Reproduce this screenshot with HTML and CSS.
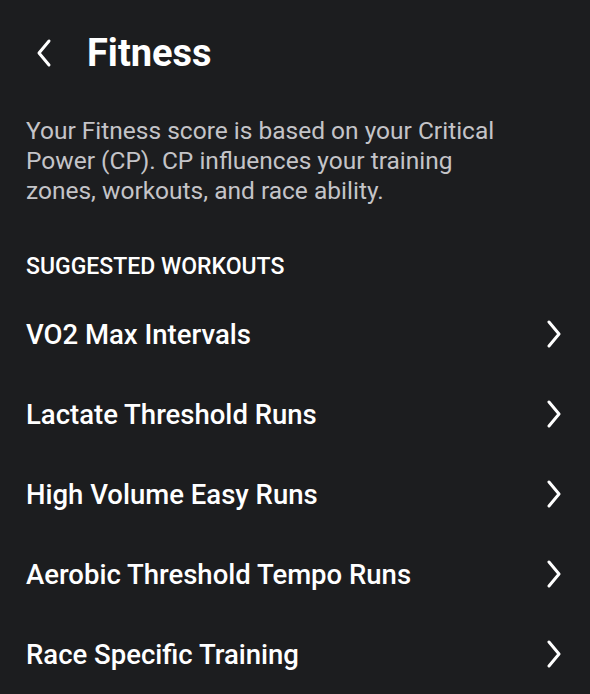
FILE: index.html
```html
<!DOCTYPE html>
<html>
<head>
<meta charset="utf-8">
<link rel="stylesheet" href="styles.css">
</head>
<body>
<div class="screen">
  <header class="header">
    <svg class="back" width="16" height="30" viewBox="0 0 16 30"><path d="M13 3 L3 15 L13 27" fill="none" stroke="#fff" stroke-width="3" stroke-linecap="round" stroke-linejoin="round"/></svg>
    <h1 class="title">Fitness</h1>
  </header>
  <p class="desc">Your Fitness score is based on your Critical Power (CP). CP influences your training zones, workouts, and race ability.</p>
  <h2 class="section">SUGGESTED WORKOUTS</h2>
  <ul class="list">
    <li class="row"><span>VO2 Max Intervals</span><svg class="chev" width="14" height="28" viewBox="0 0 14 28"><path d="M2 2 L12 14 L2 26" fill="none" stroke="#fff" stroke-width="3" stroke-linecap="round" stroke-linejoin="round"/></svg></li>
    <li class="row"><span>Lactate Threshold Runs</span><svg class="chev" width="14" height="28" viewBox="0 0 14 28"><path d="M2 2 L12 14 L2 26" fill="none" stroke="#fff" stroke-width="3" stroke-linecap="round" stroke-linejoin="round"/></svg></li>
    <li class="row"><span>High Volume Easy Runs</span><svg class="chev" width="14" height="28" viewBox="0 0 14 28"><path d="M2 2 L12 14 L2 26" fill="none" stroke="#fff" stroke-width="3" stroke-linecap="round" stroke-linejoin="round"/></svg></li>
    <li class="row"><span>Aerobic Threshold Tempo Runs</span><svg class="chev" width="14" height="28" viewBox="0 0 14 28"><path d="M2 2 L12 14 L2 26" fill="none" stroke="#fff" stroke-width="3" stroke-linecap="round" stroke-linejoin="round"/></svg></li>
    <li class="row"><span>Race Specific Training</span><svg class="chev" width="14" height="28" viewBox="0 0 14 28"><path d="M2 2 L12 14 L2 26" fill="none" stroke="#fff" stroke-width="3" stroke-linecap="round" stroke-linejoin="round"/></svg></li>
  </ul>
</div>
</body>
</html>
```
FILE: styles.css
```css
html, body {
  margin: 0;
  padding: 0;
  background: #1c1d1f;
}
body {
  font-family: Roboto, "Liberation Sans", sans-serif;
  color: #fff;
  width: 590px;
  height: 694px;
  overflow: hidden;
}
.screen {
  padding: 0 29px 0 26px;
}
.header {
  display: flex;
  align-items: center;
  height: 106px;
  padding-left: 10px;
  gap: 35px;
}
.back {
  display: block;
}
.title {
  margin: 0;
  font-size: 38px;
  font-weight: 700;
  letter-spacing: 0;
}
.desc {
  margin: 10px 0 0;
  max-width: 492px;
  font-size: 24.5px;
  line-height: 30px;
  color: #c4c4c8;
}
.section {
  margin: 48px 0 0;
  font-size: 23px;
  font-weight: 500;
  line-height: 26px;
}
.list {
  list-style: none;
  margin: 14px 0 0;
  padding: 0;
}
.row {
  display: flex;
  align-items: center;
  justify-content: space-between;
  height: 80px;
  font-size: 27.5px;
  font-weight: 500;
}
.chev {
  display: block;
}
```
